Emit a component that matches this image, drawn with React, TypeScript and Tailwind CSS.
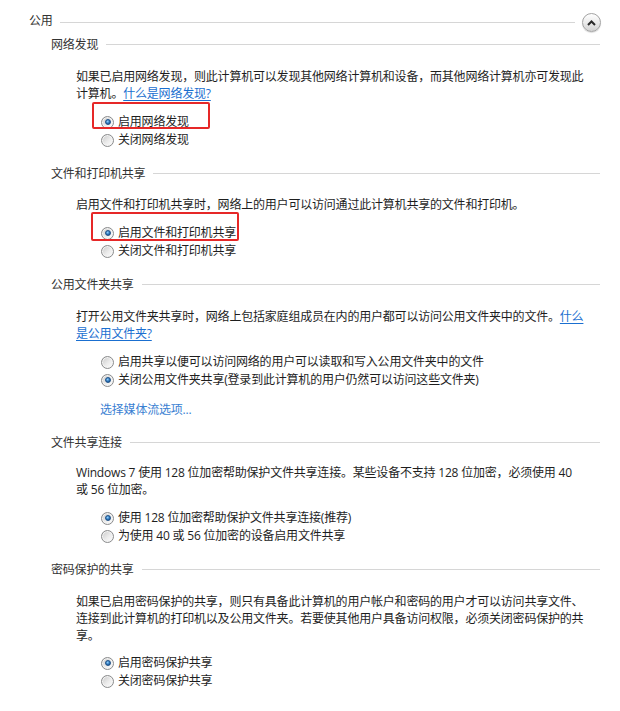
import type { ReactNode } from "react";

const font = "font-['Open_Sans','Noto_Sans_CJK_SC',sans-serif]";

function Radio({ checked = false }: { checked?: boolean }) {
  return (
    <span className="flex h-[13px] w-[13px] shrink-0 items-center justify-center rounded-full border border-[#8a8b8c] bg-[linear-gradient(135deg,#c8c8c8,#ececec_55%,#ffffff)] shadow-[inset_0_0_0_1px_#f4f4f4]">
      {checked && (
        <span className="h-[6px] w-[6px] rounded-full border border-[#1d4f86] bg-[radial-gradient(circle_at_40%_35%,#8fd0ff,#2a73b8_55%,#174a80)]" />
      )}
    </span>
  );
}

function Option({ checked, children }: { checked?: boolean; children: ReactNode }) {
  return (
    <div className="flex h-[18px] items-center gap-[4px] pl-[101px] text-[12px] tracking-[-0.2px] text-[#1e1e1e]">
      <Radio checked={checked} />
      <span className="whitespace-nowrap leading-[16px]">{children}</span>
    </div>
  );
}

function SubHeading({ title, className = "" }: { title: string; className?: string }) {
  return (
    <div className={`flex h-[17px] items-center pl-[51px] pr-[20px] ${className}`}>
      <span className="whitespace-nowrap text-[12px] leading-[16px] tracking-[-0.2px] text-[#333]">{title}</span>
      <div className="ml-[8px] h-px flex-1 bg-[#d6d6d6]" />
    </div>
  );
}

function Desc({ className = "", children }: { className?: string; children: ReactNode }) {
  return (
    <p className={`whitespace-nowrap pl-[76px] text-[12px] leading-[17px] tracking-[-0.2px] text-[#1e1e1e] ${className}`}>
      {children}
    </p>
  );
}

function Link({ children }: { children: ReactNode }) {
  return <span className="text-[#1a6fd0] underline underline-offset-2">{children}</span>;
}

export default function App() {
  return (
    <div className={`h-[711px] w-[620px] overflow-hidden bg-white pt-[12px] ${font}`}>
      {/* 公用 header */}
      <div className="flex h-[17px] items-center pl-[29px] pr-[19px]">
        <span className="text-[12px] leading-[16px] tracking-[-0.2px] text-[#333]">公用</span>
        <div className="ml-[7px] mt-[4px] h-px flex-1 bg-[#d6d6d6]" />
        <button className="ml-[7px] mt-[4px] flex h-[19px] w-[19px] items-center justify-center rounded-full border border-[#a3a3a3] bg-[linear-gradient(180deg,#ffffff,#e9e9e9_55%,#d2d2d2)] shadow-[0_1px_1px_rgba(0,0,0,0.15)]">
          <svg width="9" height="6" viewBox="0 0 9 6">
            <path d="M1 5 L4.5 1.5 L8 5" fill="none" stroke="#2a2a2a" strokeWidth="2" />
          </svg>
        </button>
      </div>

      {/* 网络发现 */}
      <SubHeading title="网络发现" className="mt-[7px]" />
      <Desc className="mt-[15px]">
        如果已启用网络发现，则此计算机可以发现其他网络计算机和设备，而其他网络计算机亦可发现此
        <br />
        计算机。<Link>什么是网络发现?</Link>
      </Desc>
      <div className="relative mt-[11px]">
        <div className="pointer-events-none absolute left-[92px] top-[-11px] h-[27px] w-[118px] rounded-[2px] border-2 border-[#e62828]" />
        <Option checked>启用网络发现</Option>
        <Option>关闭网络发现</Option>
      </div>

      {/* 文件和打印机共享 */}
      <SubHeading title="文件和打印机共享" className="mt-[16px]" />
      <Desc className="mt-[14px]">启用文件和打印机共享时，网络上的用户可以访问通过此计算机共享的文件和打印机。</Desc>
      <div className="relative mt-[11px]">
        <div className="pointer-events-none absolute left-[91px] top-[-12px] h-[29px] w-[148px] rounded-[2px] border-2 border-[#e62828]" />
        <Option checked>启用文件和打印机共享</Option>
        <Option>关闭文件和打印机共享</Option>
      </div>

      {/* 公用文件夹共享 */}
      <SubHeading title="公用文件夹共享" className="mt-[16px]" />
      <Desc className="mt-[15px]">
        打开公用文件夹共享时，网络上包括家庭组成员在内的用户都可以访问公用文件夹中的文件。<Link>什么</Link>
        <br />
        <Link>是公用文件夹?</Link>
      </Desc>
      <div className="mt-[11px]">
        <Option>启用共享以便可以访问网络的用户可以读取和写入公用文件夹中的文件</Option>
        <Option checked>关闭公用文件夹共享(登录到此计算机的用户仍然可以访问这些文件夹)</Option>
      </div>
      <div className="mt-[12px] pl-[100px] text-[12px] leading-[17px] tracking-[-0.2px] text-[#3a7fd2]">选择媒体流选项...</div>

      {/* 文件共享连接 */}
      <SubHeading title="文件共享连接" className="mt-[16px]" />
      <Desc className="mt-[13px]">
        Windows 7 使用 128 位加密帮助保护文件共享连接。某些设备不支持 128 位加密，必须使用 40
        <br />
        或 56 位加密。
      </Desc>
      <div className="mt-[11px]">
        <Option checked>使用 128 位加密帮助保护文件共享连接(推荐)</Option>
        <Option>为使用 40 或 56 位加密的设备启用文件共享</Option>
      </div>

      {/* 密码保护的共享 */}
      <SubHeading title="密码保护的共享" className="mt-[16px]" />
      <Desc className="mt-[15px]">
        如果已启用密码保护的共享，则只有具备此计算机的用户帐户和密码的用户才可以访问共享文件、
        <br />
        连接到此计算机的打印机以及公用文件夹。若要使其他用户具备访问权限，必须关闭密码保护的共
        <br />
        享。
      </Desc>
      <div className="mt-[10px]">
        <Option checked>启用密码保护共享</Option>
        <Option>关闭密码保护共享</Option>
      </div>
    </div>
  );
}
